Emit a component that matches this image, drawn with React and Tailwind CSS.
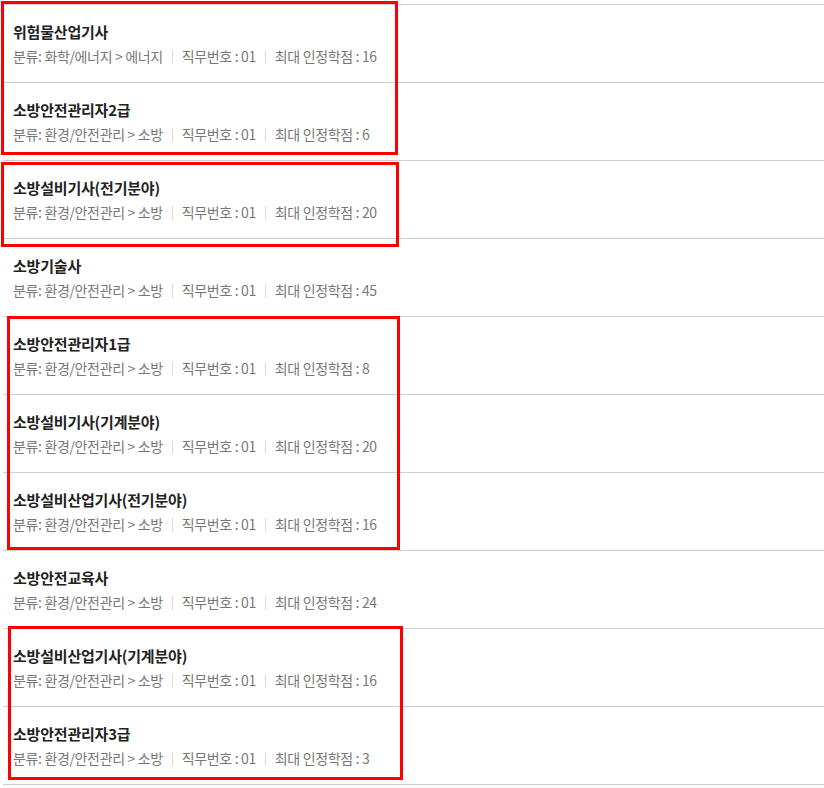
const items = [
  { name: '위험물산업기사', cat: '화학/에너지 > 에너지', credit: 16 },
  { name: '소방안전관리자2급', cat: '환경/안전관리 > 소방', credit: 6 },
  { name: '소방설비기사(전기분야)', cat: '환경/안전관리 > 소방', credit: 20 },
  { name: '소방기술사', cat: '환경/안전관리 > 소방', credit: 45 },
  { name: '소방안전관리자1급', cat: '환경/안전관리 > 소방', credit: 8 },
  { name: '소방설비기사(기계분야)', cat: '환경/안전관리 > 소방', credit: 20 },
  { name: '소방설비산업기사(전기분야)', cat: '환경/안전관리 > 소방', credit: 16 },
  { name: '소방안전교육사', cat: '환경/안전관리 > 소방', credit: 24 },
  { name: '소방설비산업기사(기계분야)', cat: '환경/안전관리 > 소방', credit: 16 },
  { name: '소방안전관리자3급', cat: '환경/안전관리 > 소방', credit: 3 },
]

// highlight boxes drawn over the list
const marks = [
  'left-[1px] top-[1px] w-[397px] h-[154px]',
  'left-[1px] top-[162px] w-[398px] h-[85px]',
  'left-[7px] top-[316px] w-[393px] h-[234px]',
  'left-[8px] top-[626px] w-[395px] h-[154px]',
]

function Divider() {
  return <span className="mx-[9px] inline-block h-[14px] w-px bg-[#dcdcdc] align-[-2px]" />
}

export default function App() {
  return (
    <div className="relative h-[788px] w-[824px] overflow-hidden bg-white font-['Noto_Sans_CJK_KR','Noto_Sans',sans-serif]">
      <ul className="ml-[3px] mt-[4px] border-t border-[#cfcfcf]">
        {items.map((it) => (
          <li key={it.name} className="flex h-[78px] flex-col border-b border-[#cfcfcf] pl-[10px] pt-[17px]">
            <p className="text-[15px] font-bold leading-[20px] tracking-[-0.2px] text-[#222]">{it.name}</p>
            <p className="mt-[4px] text-[14px] leading-[20px] tracking-[-0.35px] text-[#777]">
              분류: {it.cat}
              <Divider />
              직무번호 : 01
              <Divider />
              최대 인정학점 : {it.credit}
            </p>
          </li>
        ))}
      </ul>
      {marks.map((m) => (
        <div key={m} className={`pointer-events-none absolute border-[3px] border-[#ff0000] ${m}`} />
      ))}
    </div>
  )
}
